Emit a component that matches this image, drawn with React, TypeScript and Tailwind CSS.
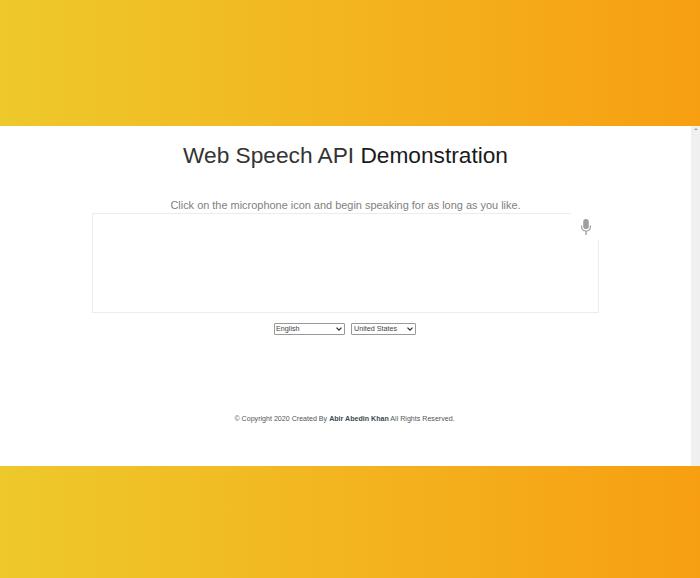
function Chevron() {
  return (
    <svg className="pointer-events-none absolute right-[3px] top-[4px]" width="6" height="4" viewBox="0 0 6 4" fill="none" stroke="#333" strokeWidth="1.3">
      <path d="M0.5 0.6 3 3.1 5.5 0.6" />
    </svg>
  );
}

export default function App() {
  return (
    <div className="h-[578px] w-[700px] overflow-hidden flex flex-col font-['Liberation_Sans',Arial,sans-serif] bg-white">
      <div className="h-[126px] bg-gradient-to-r from-[#edc92b] to-[#f79f10]" />
      <div className="h-[340px] flex">
        <main className="w-[691px] flex flex-col items-center">
          <h1 className="mt-[15px] text-[22.7px] leading-[28px] font-normal text-[#333]">
            Web Speech API <span className="text-[#1a1a1a]">Demonstration</span>
          </h1>
          <p className="mt-[29px] text-[10.95px] leading-[14px] text-[#808080]">
            Click on the microphone icon and begin speaking for as long as you like.
          </p>
          <div className="relative mt-[1px] h-[100px] w-[507px] border border-[#ececec] bg-white">
            <div className="absolute -right-px -top-px flex h-[27px] w-[28px] items-center justify-center bg-white pt-[1px] pl-[2px]">
              <svg width="12" height="16" viewBox="0 0 12 16" fill="#9e9e9e">
                <rect x="3.2" y="0" width="5.6" height="10" rx="2.8" />
                <path d="M1 6.5h1.2v1.2a3.8 3.8 0 0 0 7.6 0V6.5H11v1.2a5 5 0 0 1-4.3 4.9V16H5.3v-3.4A5 5 0 0 1 1 7.7z" />
              </svg>
            </div>
          </div>
          <div className="mt-[10px] mr-[1px] flex gap-[6px]">
            <div className="relative h-[12px] w-[71px]">
              <select className="block h-full w-full appearance-none rounded-[1px] border border-[#999] bg-white py-0 pl-[1px] pr-0 text-[7.2px] leading-[10px] text-[#444]">
                <option>English</option>
              </select>
              <Chevron />
            </div>
            <div className="relative h-[12px] w-[65px]">
              <select className="block h-full w-full appearance-none rounded-[1px] border border-[#999] bg-white py-0 pl-[2px] pr-0 text-[7.2px] leading-[10px] text-[#444]">
                <option>United States</option>
              </select>
              <Chevron />
            </div>
          </div>
          <footer className="mt-[79px] mr-[2px] text-[7.1px] leading-[10px] text-[#555]">
            © Copyright 2020 Created By <b className="font-bold text-[#3c4a50]">Abir Abedin Khan</b> All Rights Reserved.
          </footer>
        </main>
        <div className="w-[9px] bg-[#f0f0f0] flex justify-center pt-[2px]">
          <div className="h-0 w-0 border-x-[2px] border-b-[2px] border-x-transparent border-b-[#a3a3a3]" />
        </div>
      </div>
      <div className="h-[112px] bg-gradient-to-r from-[#edc92b] to-[#f79f10]" />
    </div>
  );
}
